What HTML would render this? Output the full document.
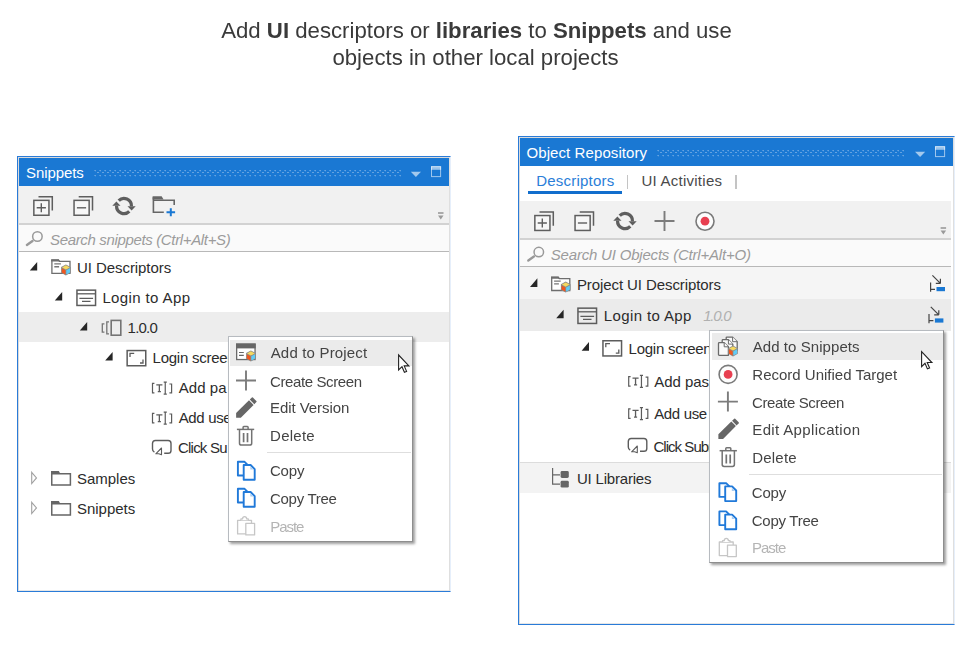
<!DOCTYPE html>
<html><head><meta charset="utf-8"><style>
*{box-sizing:border-box;margin:0;padding:0}
html,body{width:967px;height:650px;background:#fff;overflow:hidden}
body{position:relative;font-family:"Liberation Sans",sans-serif;font-size:15px;color:#2b2b2b}
.abs{position:absolute}
.hd{position:absolute;will-change:transform;left:0;width:967px;text-align:center;font-size:22.2px;line-height:26px;color:#3a3a3a;white-space:nowrap}
.panel{position:absolute;background:#fff;border:1px solid #2a7bd8;border-right-color:#e6effb;box-shadow:inset 1px 1px 0 #dadada,inset 0 -1px 0 #e6e6e6}
.title{position:absolute;background:#1a78d3;height:28px}
.grip{position:absolute;height:7px;background-image:radial-gradient(ellipse 1.3px 0.8px at 1.3px 0.8px,rgba(255,255,255,.32) 60%,transparent 100%),radial-gradient(ellipse 1.3px 0.8px at 3.8px 2.5px,rgba(255,255,255,.32) 60%,transparent 100%);background-size:5px 5px,5px 5px}
.tb{position:absolute;background:#f1f1f1;border-bottom:2px solid #d2d2d2}
.search{position:absolute;background:#fafafa;border-bottom:1px solid #b8b8b8}
.t{position:absolute;height:20px;line-height:20px;white-space:nowrap;color:#2c2c2c}
.hl{position:absolute;background:#ededed}
.menu{position:absolute;background:#fff;border:1px solid #b7bbc0;border-right-color:#8e8e8e;border-bottom-color:#8e8e8e;box-shadow:2px 2px 2.5px rgba(0,0,0,.38)}
.sep{position:absolute;height:1px;background:#dedede}
svg{position:absolute;overflow:visible}
</style></head><body>
<svg width="0" height="0" style="position:absolute"><defs>
<g id="expAll" fill="none" stroke="#5e5e5e" stroke-width="1.5"><rect x="0.75" y="0.75" width="15.1" height="14.9" fill="#f7f7f7"/><path d="M5.4,-2.8H19.2V10.9"/><path d="M3.6,8.2H12.8M8.2,3.7V12.7" stroke-width="1.4"/></g>
<g id="colAll" fill="none" stroke="#5e5e5e" stroke-width="1.5"><rect x="0.75" y="0.75" width="15.1" height="14.9" fill="#f7f7f7"/><path d="M5.4,-2.8H19.2V10.9"/><path d="M3.6,8.2H12.8" stroke-width="1.4"/></g>
<g id="refresh"><path d="M-5.3,-5.3A7.45,7.45 0 0 1 7.45,0.2M5.3,5.3A7.45,7.45 0 0 1 -7.45,-0.2" fill="none" stroke="#5e5e5e" stroke-width="3.2"/><path d="M3.5,0.2H11.7L7.6,4.6ZM-11.7,-0.2H-3.5L-7.6,-4.6Z" fill="#5e5e5e"/></g>
<g id="plusBig" fill="none" stroke="#7c7c7c" stroke-width="1.9"><path d="M-10,0H10M0,-10V10"/></g>
<g id="record"><circle r="9" fill="#fdfdfd" stroke="#7a7a7a" stroke-width="1.6"/><circle r="4.4" fill="#e83f50"/></g>
<g id="overflow" fill="#9a9a9a"><rect x="0" y="0" width="5.5" height="1.6"/><path d="M0,3.4H5.5L2.75,7.2Z"/></g>
<g id="mag" fill="none" stroke="#999" stroke-width="1.5"><circle cx="11.4" cy="4.5" r="4.75"/><path d="M6.5,8.9L0.9,12.9" stroke-width="2.4" stroke-linecap="round"/></g>
<path id="exp" d="M8,-0.3V8.3H0.6Z" fill="#262626"/>
<path id="expc" d="M0.5,0.5L5.3,6.1L0.5,11.7Z" fill="none" stroke="#a0a0a0" stroke-width="1.1"/>
<g id="cube"><path d="M5,0.2L9.8,2.9V8.5L5,11.2L0.2,8.5V2.9Z" fill="#8a8a8a"/><path d="M5,1.1L8.9,3.2L5,5.3L1.1,3.2Z" fill="#f6d85e"/><path d="M0.9,4L4.6,6V10.3L0.9,8.2Z" fill="#f0571f"/><path d="M9.1,4L5.4,6V10.3L9.1,8.2Z" fill="#60ccf6"/></g>
<g id="uidesc"><path d="M0.7,0.9H7.3L8.3,2.2H18.8V14.1H0.7Z" fill="#fff" stroke="#6e6e6e" stroke-width="1.3"/><path d="M0,0H7.6L8.8,2.4H0Z" fill="#6e6e6e"/><path d="M3.1,4.7H9.7M3.1,7.5H7.9" stroke="#777" stroke-width="1.4"/><use href="#cube" x="9.7" y="5"/></g>
<g id="app" fill="none" stroke="#5c5c5c"><rect x="0.75" y="0.75" width="18.6" height="15.3" stroke-width="1.5"/><path d="M0.75,4.4H19.3" stroke-width="1.3"/><path d="M3.2,8.9H16.9M5.8,12H14.3" stroke-width="1.3"/></g>
<g id="ver" fill="none" stroke="#747474"><rect x="10" y="0.8" width="9.6" height="14.8" stroke-width="1.6"/><path d="M7.8,2.3H5.6V14.3H7.8" stroke-width="1.3"/><path d="M3.2,4.2H1.1V12.6H3.2" stroke-width="1.3"/></g>
<g id="screen" fill="none" stroke="#5c5c5c"><rect x="0.75" y="0.75" width="18.6" height="15.2" stroke-width="1.5"/><path d="M3.6,7.2V3.6H7.8M16.6,9.6V13.2H13.6" stroke-width="1.3"/></g>
<g id="txt" fill="none" stroke="#5c5c5c" stroke-width="1.2"><path d="M3,1.8H1.1V11.3H3"/><path d="M4.9,3.3H11M7.95,3.3V10M6.4,10.1H9.5" stroke-width="1.3"/><path d="M12.3,0.6H15.4M13.85,0.6V12.6M12.3,12.6H15.4"/><path d="M18,2.4H20.2V11.3H18"/></g>
<g id="click" fill="none" stroke="#5c5c5c" stroke-width="1.4"><path d="M2.6,12.4C1.3,11.8 0.7,10.8 0.7,9.2V3.6C0.7,1.7 1.7,0.7 3.6,0.7H16.3C18.2,0.7 19.2,1.7 19.2,3.6V10.6C19.2,12.5 18.2,13.5 16.3,13.5H12.4"/><path d="M9.7,15V8.2L4,14H7Z" stroke-width="1.1" stroke-linejoin="round"/></g>
<g id="folder"><path d="M0.75,2.9H19.4V14H0.75Z" fill="none" stroke="#666" stroke-width="1.5"/><path d="M0,0H7.8L9.2,2.6H0Z" fill="#666"/></g>
<g id="lib"><path d="M0.6,0V16.2H8M0.6,6.9H8" fill="none" stroke="#666" stroke-width="1.2"/><rect x="8.6" y="3" width="8.2" height="7" rx="1.4" fill="#666"/><rect x="8.6" y="12.8" width="8.2" height="6.8" rx="1.4" fill="#666"/></g>
<g id="tosnip"><path d="M0,0L8,8M8,8V3.4M8,8H3.4" fill="none" stroke="#444" stroke-width="1.2"/><path d="M-1.8,7.2V16.4M-1.8,13.9H2.6" fill="none" stroke="#444" stroke-width="1.2"/><rect x="4.1" y="11.6" width="8.5" height="4.2" fill="#1a78d3"/></g>
<g id="pencil" fill="#666"><path d="M0.6,20.4V15.7L13.5,2.9L18.1,7.5L5.3,20.4Z"/><path d="M14.3,2.2L16.4,0.1Q16.9,-0.3 17.4,0.2L20.9,3.7Q21.3,4.2 20.9,4.7L18.8,6.8Z"/></g>
<g id="trash" fill="none" stroke="#737373" stroke-width="1.5"><path d="M0,3.7H17.3"/><path d="M6.2,3.5V1.5Q6.2,0.75 7,0.75H10.4Q11.2,0.75 11.2,1.5V3.5"/><path d="M2.6,3.9V17.5Q2.6,19.4 4.5,19.4H12.9Q14.8,19.4 14.8,17.5V3.9"/><path d="M6.7,7.4V16.6M10.6,7.4V16.6" stroke-width="1.7"/></g>
<g id="copy" fill="#fff" stroke="#2079d9" stroke-width="1.9" stroke-linejoin="round"><path d="M1,1H7.7L11.2,4.5V14.7H1Z"/><path d="M6.8,4.2H13.7L17.8,8.3V18.9H6.8Z"/><path d="M13.4,5.4V8.7H16.7Z" stroke="none" fill="#a9cdf2"/></g>
<g id="paste" fill="#fff" stroke="#c6c6c6" stroke-width="1.3" stroke-linejoin="round"><path d="M0.7,4.4H14.6V18H0.7Z"/><path d="M4,4.4V3H5.6C5.8,0 9.6,0 9.8,3H11.4V4.4"/><path d="M8.9,7.5H17.7V19H8.9Z"/></g>
<g id="cursor"><path d="M0.6,0.6V15.6L4,12.3L6.4,17.9L8.6,17L6.2,11.5H10.9Z" fill="#fff" stroke="#222" stroke-width="1.1" stroke-linejoin="miter"/></g>
<g id="ttri"><path d="M0,0H10.2L5.1,5.2Z" fill="rgba(255,255,255,.6)"/></g>
<g id="tmax"><rect x="0.5" y="0.5" width="9.1" height="9.9" fill="none" stroke="rgba(255,255,255,.58)" stroke-width="1"/><rect x="0" y="0" width="10.1" height="3.6" fill="rgba(255,255,255,.55)"/></g>
<g id="snip"><g fill="#fafafa" stroke="#6a6a6a" stroke-width="1.3" stroke-linejoin="round"><path d="M9.2,0.7H14.8L19.4,5.3V14H9.2Q8.4,14 8.4,13.2V1.5Q8.4,0.7 9.2,0.7Z"/><path d="M14.8,0.7V5.3H19.4" stroke-width="1"/><path d="M5.2,3.3H10.6L15,7.7V16.5H5.2Q4.4,16.5 4.4,15.7V4.1Q4.4,3.3 5.2,3.3Z"/><path d="M10.6,3.3V7.7H15" stroke-width="1"/><path d="M1.5,6.2H6.4L10.6,10.4V18.9H1.5Q0.7,18.9 0.7,18.1V7Q0.7,6.2 1.5,6.2Z"/><path d="M6.4,6.2V10.4H10.6" stroke-width="1"/></g><use href="#cube" x="10.2" y="8.9"/></g>
<g id="winproj"><rect x="0.65" y="0.65" width="18.4" height="15.4" fill="#fff" stroke="#6a6a6a" stroke-width="1.3"/><rect x="0" y="0" width="19.7" height="4.9" fill="#666"/><path d="M3,9H7.8M3,11.9H7.8" stroke="#666" stroke-width="1.2"/><use href="#cube" x="9.9" y="6.7"/></g>
</defs></svg>
<div class="hd" style="top:18px;left:-7.4px">Add <b>UI</b> descriptors or <b>libraries</b> to <b>Snippets</b> and use</div>
<div class="hd" style="top:45px;left:-7.6px">objects in other local projects</div>
<!-- LEFT PANEL -->
<div class="panel" style="left:17px;top:156px;width:434px;height:436px"></div>
<div class="abs" style="left:449px;top:157px;width:1px;height:434px;background:#dfdfdf"></div>
<div class="title" style="left:19px;top:158px;width:430px"></div>
<div class="grip" style="left:93.5px;top:169.8px;width:307px"></div>
<div class="tb" style="left:19px;top:186px;width:430px;height:39px"></div>
<div class="search" style="left:19px;top:225px;width:430px;height:27px"></div>
<div class="hl" style="left:19px;top:312px;width:430px;height:30px"></div>
<!-- RIGHT PANEL -->
<div class="panel" style="left:518px;top:136px;width:437px;height:489px"></div>
<div class="abs" style="left:953px;top:137px;width:1px;height:487px;background:#dfdfdf"></div>
<div class="title" style="left:520px;top:138px;width:433px"></div>
<div class="grip" style="left:657px;top:149.8px;width:248px"></div>
<div class="abs" style="left:528px;top:191px;width:94.3px;height:3px;background:#116ecd"></div>
<div class="abs" style="left:627px;top:174.5px;width:1.3px;height:14px;background:#c4c4c4"></div>
<div class="abs" style="left:735.3px;top:174.5px;width:1.3px;height:14px;background:#c4c4c4"></div>
<div class="tb" style="left:520px;top:201px;width:431px;height:39px"></div>
<div class="search" style="left:520px;top:240px;width:431px;height:26.5px"></div>
<div class="hl" style="left:520px;top:266.5px;width:431px;height:32.5px;background:#f5f5f5"></div>
<div class="hl" style="left:520px;top:299px;width:431px;height:32px;background:#ebebeb"></div>
<div class="sep" style="left:520px;top:461.5px;width:431px;background:#dcdcdc"></div>
<div class="hl" style="left:520px;top:462.5px;width:431px;height:30px;background:#f3f3f3"></div>
<div class="t" style="left:26.10px;top:163px;letter-spacing:-0.111px;color:#fff">Snippets</div>
<div class="t" style="left:50.10px;top:230px;letter-spacing:-0.351px;color:#9c9c9c;font-style:italic">Search snippets (Ctrl+Alt+S)</div>
<div class="t" style="left:77.00px;top:258px;letter-spacing:-0.064px;">UI Descriptors</div>
<div class="t" style="left:102.40px;top:288px;letter-spacing:0.380px;">Login to App</div>
<div class="t" style="left:127.60px;top:318px;letter-spacing:-0.794px;">1.0.0</div>
<div class="t" style="left:152.60px;top:348px;letter-spacing:-0.256px;">Login screen</div>
<div class="t" style="left:178.70px;top:378px;letter-spacing:0.051px;">Add pa</div>
<div class="t" style="left:178.70px;top:408px;letter-spacing:-0.341px;">Add username</div>
<div class="t" style="left:178.00px;top:438px;letter-spacing:-0.788px;">Click Su</div>
<div class="t" style="left:76.90px;top:469px;letter-spacing:0.000px;">Samples</div>
<div class="t" style="left:76.90px;top:499px;letter-spacing:0.000px;">Snippets</div>
<div class="t" style="left:526.50px;top:143px;letter-spacing:0.086px;color:#fff">Object Repository</div>
<div class="t" style="left:536.20px;top:171px;letter-spacing:0.224px;color:#2a7ed8">Descriptors</div>
<div class="t" style="left:641.40px;top:171px;letter-spacing:0.256px;color:#4a4a4a">UI Activities</div>
<div class="t" style="left:550.80px;top:245px;letter-spacing:-0.197px;color:#9c9c9c;font-style:italic">Search UI Objects (Ctrl+Alt+O)</div>
<div class="t" style="left:576.90px;top:275px;letter-spacing:-0.085px;">Project UI Descriptors</div>
<div class="t" style="left:603.80px;top:306px;letter-spacing:0.380px;">Login to App</div>
<div class="t" style="left:703.30px;top:306px;letter-spacing:-1.269px;color:#b0b0b0;font-style:italic">1.0.0</div>
<div class="t" style="left:628.60px;top:339px;letter-spacing:-0.256px;">Login screen</div>
<div class="t" style="left:654.20px;top:372px;letter-spacing:-0.024px;">Add password</div>
<div class="t" style="left:654.20px;top:404px;letter-spacing:-0.341px;">Add use</div>
<div class="t" style="left:653.50px;top:437px;letter-spacing:-0.970px;">Click Submit</div>
<div class="t" style="left:576.90px;top:469px;letter-spacing:-0.191px;">UI Libraries</div>
<svg class="ov" width="967" height="650" viewBox="0 0 967 650" style="left:0;top:0">
<!-- left title -->
<use href="#ttri" x="410.8" y="171.8"/><use href="#tmax" x="431" y="166.2"/>
<!-- left toolbar -->
<use href="#expAll" x="33.1" y="199.6"/><use href="#colAll" x="73.3" y="199.6"/><use href="#refresh" x="124" y="206"/>
<g><path d="M153.4,197.2V212.3H163.8M153.4,200.2H174.2V205" fill="none" stroke="#666" stroke-width="1.6"/><path d="M152.6,196.2H161.6L163.6,199.6H152.6Z" fill="#666"/><path d="M166.5,212.3H175.1M170.8,208.2V216.2" stroke="#1a78d3" stroke-width="2"/></g>
<use href="#overflow" x="438" y="212.2"/>
<use href="#mag" x="26" y="232"/>
<!-- left tree -->
<use href="#exp" x="29.2" y="262.2"/><use href="#uidesc" x="51.2" y="259.2"/>
<use href="#exp" x="54.2" y="292.2"/><use href="#app" x="76.2" y="289.4"/>
<use href="#exp" x="79.2" y="322.2"/><use href="#ver" x="101.2" y="319.6"/>
<use href="#exp" x="104.6" y="352.2"/><use href="#screen" x="126.4" y="349.8"/>
<use href="#txt" x="151.4" y="381.6"/><use href="#txt" x="151.4" y="411.6"/><use href="#click" x="151.8" y="439.8"/>
<use href="#expc" x="31.2" y="471.8"/><use href="#folder" x="51" y="470.9"/>
<use href="#expc" x="31.2" y="501.8"/><use href="#folder" x="51" y="500.9"/>
<!-- right title -->
<use href="#ttri" x="915" y="151.8"/><use href="#tmax" x="935" y="146.2"/>
<!-- right toolbar -->
<use href="#expAll" x="534.1" y="214.8"/><use href="#colAll" x="574.3" y="214.8"/><use href="#refresh" x="625" y="221"/>
<use href="#plusBig" x="664.5" y="221"/><use href="#record" x="705" y="221.2"/>
<use href="#overflow" x="940.6" y="227.2"/>
<use href="#mag" x="527.4" y="247.6"/>
<!-- right tree -->
<use href="#exp" x="529.4" y="278.6"/><use href="#uidesc" x="551" y="276.4"/>
<use href="#exp" x="555.6" y="310"/><use href="#app" x="577.2" y="307.4"/>
<use href="#exp" x="581" y="342.4"/><use href="#screen" x="602.2" y="340"/>
<use href="#txt" x="627.6" y="374.8"/><use href="#txt" x="627.6" y="407"/><use href="#click" x="627.6" y="437.8"/>
<use href="#lib" x="552" y="468"/>
<use href="#tosnip" x="932.4" y="275.4"/><use href="#tosnip" x="930.8" y="306.8"/>
</svg>
<!-- MENUS -->
<div class="menu" style="left:227.6px;top:336.4px;width:185.4px;height:205.2px"></div>
<div class="hl" style="left:230px;top:339.5px;width:182px;height:26.5px;background:#ebebeb"></div>
<div class="sep" style="left:267.4px;top:451.7px;width:143.6px"></div>
<div class="menu" style="left:709px;top:330px;width:235px;height:233px"></div>
<div class="hl" style="left:712px;top:333.3px;width:231px;height:26.8px;background:#ebebeb"></div>
<div class="sep" style="left:749px;top:473.9px;width:193px"></div>
<div class="t" style="left:270.70px;top:343px;letter-spacing:0.175px;color:#444">Add to Project</div>
<div class="t" style="left:270.00px;top:372px;letter-spacing:-0.393px;color:#444">Create Screen</div>
<div class="t" style="left:270.10px;top:398px;letter-spacing:-0.077px;color:#444">Edit Version</div>
<div class="t" style="left:270.10px;top:426px;letter-spacing:0.248px;color:#444">Delete</div>
<div class="t" style="left:270.00px;top:461px;letter-spacing:-0.210px;color:#444">Copy</div>
<div class="t" style="left:270.00px;top:489px;letter-spacing:-0.288px;color:#444">Copy Tree</div>
<div class="t" style="left:270.20px;top:517px;letter-spacing:-1.040px;color:#b4b4b4">Paste</div>
<div class="t" style="left:752.70px;top:337px;letter-spacing:0.070px;color:#444">Add to Snippets</div>
<div class="t" style="left:752.30px;top:365px;letter-spacing:-0.001px;color:#444">Record Unified Target</div>
<div class="t" style="left:752.00px;top:393px;letter-spacing:-0.360px;color:#444">Create Screen</div>
<div class="t" style="left:752.30px;top:420px;letter-spacing:0.348px;color:#444">Edit Application</div>
<div class="t" style="left:752.30px;top:448px;letter-spacing:0.188px;color:#444">Delete</div>
<div class="t" style="left:751.80px;top:483px;letter-spacing:-0.177px;color:#444">Copy</div>
<div class="t" style="left:751.80px;top:511px;letter-spacing:-0.275px;color:#444">Copy Tree</div>
<div class="t" style="left:752.10px;top:538px;letter-spacing:-1.040px;color:#b4b4b4">Paste</div>
<svg class="ov" width="967" height="650" viewBox="0 0 967 650" style="left:0;top:0">
<!-- left menu -->
<use href="#winproj" x="236" y="343.5"/>
<use href="#plusBig" x="246" y="380.5"/>
<use href="#pencil" x="235.5" y="397.4"/>
<use href="#trash" x="236.9" y="425.7"/>
<use href="#copy" x="236.9" y="460.8"/><use href="#copy" x="236.9" y="487.8"/>
<use href="#paste" x="236.9" y="515.9"/>
<use href="#cursor" x="398" y="354.4"/>
<!-- right menu -->
<use href="#snip" x="717.8" y="336.4"/>
<use href="#record" x="728.1" y="374.4"/>
<use href="#plusBig" x="727.9" y="401.6"/>
<use href="#pencil" x="717.8" y="418.6"/>
<use href="#trash" x="719.6" y="447"/>
<use href="#copy" x="718.4" y="482.2"/><use href="#copy" x="718.4" y="510.4"/>
<use href="#paste" x="718.6" y="537.6"/>
<use href="#cursor" x="921" y="351"/>
</svg>
</body></html>
